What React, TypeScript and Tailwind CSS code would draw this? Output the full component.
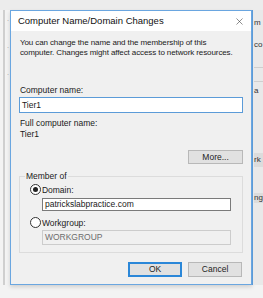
import { X } from 'lucide-react';

const font = { fontFamily: '"Liberation Sans", Arial, sans-serif' };

function Radio({ checked }: { checked: boolean }) {
  return (
    <span className="flex h-[11px] w-[11px] items-center justify-center rounded-full border border-[#333] bg-white">
      {checked && <span className="h-[5px] w-[5px] rounded-full bg-[#222]" />}
    </span>
  );
}

export default function App() {
  return (
    <div className="flex h-[298px] w-[263px] flex-col bg-[#f3f3f3] text-[8.5px] text-[#1a1a1a]" style={font}>
      <div className="flex h-[10px] bg-[#ececec]" />
      <div className="flex flex-1">
        {/* left edge of the window behind */}
        <div className="flex w-[10px] flex-col">
          <div className="flex h-[275px] pl-[3px]">
            <div className="w-[2px] bg-[#cfcfcf]" />
            <div className="flex flex-col gap-[18px] pl-[2px] pt-[6px] text-[6px] text-[#555]">
              <span>·</span>
              <span>·</span>
              <span>·</span>
            </div>
          </div>
        </div>

        {/* dialog */}
        <div className="flex h-[275px] w-[244px] flex-col border border-[#6aa6e0] bg-[#f0f0f0] shadow-[0_2px_4px_rgba(0,0,0,0.15)]">
          <div className="flex h-[20px] items-center justify-between bg-white pl-[7px] pr-[6px] text-[9.5px] text-[#111]">
            <span>Computer Name/Domain Changes</span>
            <X size={11} strokeWidth={1.2} className="text-[#333]" />
          </div>

          <div className="flex flex-1 flex-col px-[8px]">
            <div className="whitespace-nowrap pl-[1px] pt-[7px] text-[8px] leading-[10px] tracking-[-0.1px]">
              <p>You can change the name and the membership of this</p>
              <p>computer. Changes might affect access to network resources.</p>
            </div>

            <div className="pl-[1px] pt-[27px] leading-[10px]">Computer name:</div>
            <div className="mt-[2px] flex h-[16px] items-center border border-[#5b9bd8] bg-white px-[2px]">Tier1</div>

            <div className="pl-[1px] pt-[5px] leading-[11px]">
              <p>Full computer name:</p>
              <p>Tier1</p>
            </div>

            <div className="flex justify-end pt-[10px]">
              <button className="h-[14px] w-[55px] border border-[#b8b8b8] bg-[#e1e1e1] text-[8.5px] leading-none text-[#222]">
                More...
              </button>
            </div>

            <div className="relative mt-[12px] flex h-[77px] flex-col border border-[#dcdcdc] pl-[10px] pr-[11px]">
              <span className="absolute left-[5px] top-[-6px] bg-[#f0f0f0] px-[1px] leading-[10px]">Member of</span>
              <div className="flex items-center gap-[1px] pt-[7px] leading-[10px]">
                <Radio checked />
                <span>Domain:</span>
              </div>
              <div className="ml-[12px] mt-[3px] flex h-[13px] items-center border border-[#7a7a7a] bg-white px-[2px]">
                patrickslabpractice.com
              </div>
              <div className="flex items-center gap-[1px] pt-[6px] leading-[10px]">
                <Radio checked={false} />
                <span>Workgroup:</span>
              </div>
              <div className="ml-[12px] mt-[2px] flex h-[15px] items-center border border-[#cccccc] bg-[#f0f0f0] px-[2px] text-[#6d6d6d]">
                WORKGROUP
              </div>
            </div>

            <div className="flex justify-end gap-[6px] pt-[9px] pr-[1px]">
              <button className="h-[15px] w-[54px] border-2 border-[#2b87d8] bg-[#e1e1e1] text-[8.5px] leading-none text-[#222]">
                OK
              </button>
              <button className="h-[15px] w-[54px] border border-[#b8b8b8] bg-[#e1e1e1] text-[8.5px] leading-none text-[#222]">
                Cancel
              </button>
            </div>
          </div>
        </div>

        {/* right edge of the window behind */}
        <div className="flex flex-1 flex-col">
          <div className="flex h-[275px] flex-col border-l border-[#5b9bd8] bg-[#e9e9e9] pl-[1px] text-[8px] leading-[10px] text-[#333]">
            <span className="mt-[8px]">m</span>
            <span className="mt-[12px] border-b border-[#cfcfcf] pb-[17px]">co</span>
            <div className="h-[14px] border-b border-[#cfcfcf]" />
            <span className="mt-[4px]">a</span>
            <span className="mt-[57px] bg-[#dcdcdc] py-[2px] leading-[10px]">rk</span>
            <span className="mt-[26px] bg-[#dcdcdc]">ng</span>
          </div>
        </div>
      </div>
    </div>
  );
}
